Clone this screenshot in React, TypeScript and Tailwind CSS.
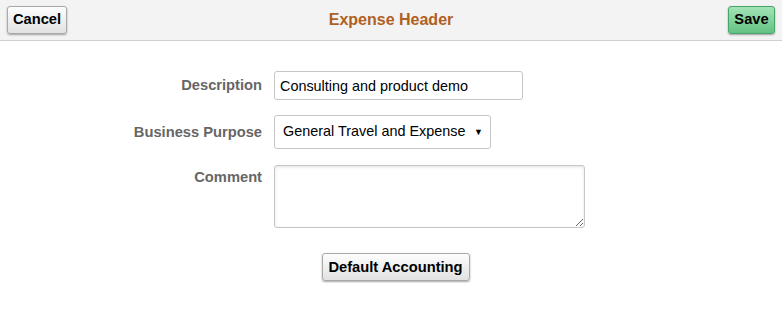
import { useState } from 'react';

const btnBase =
  'h-[28px] rounded-[3px] border px-[4px] text-[14.7px] font-bold text-black shadow-[0_1px_2px_rgba(0,0,0,0.35)]';

export default function App() {
  const [description, setDescription] = useState('Consulting and product demo');
  const [purpose, setPurpose] = useState('General Travel and Expense');
  const [comment, setComment] = useState('');

  return (
    <div className="h-[319px] w-[782px] bg-white font-['Liberation_Sans',Arial,sans-serif]">
      {/* Header bar */}
      <div className="flex h-[41px] items-center border-b border-[#d0d0d0] bg-[#f3f3f3] px-[7px] pb-[1px]">
        <div className="flex flex-1">
          <button
            className={`${btnBase} w-[60px] border-[#a9a9a9] bg-gradient-to-b from-[#fdfdfd] to-[#e2e2e2]`}
          >
            Cancel
          </button>
        </div>
        <h1 className="text-[16px] font-bold text-[#b0601f]">Expense Header</h1>
        <div className="flex flex-1 justify-end">
          <button
            className={`${btnBase} w-[47px] border-[#4aa46a] bg-gradient-to-b from-[#a3e3b7] to-[#62c283]`}
          >
            Save
          </button>
        </div>
      </div>

      {/* Form */}
      <div className="flex flex-col pt-[30px]">
        <div className="flex items-center gap-[12px]">
          <label className="w-[262px] text-right text-[14.7px] font-bold text-[#666]">Description</label>
          <input
            value={description}
            onChange={(e) => setDescription(e.target.value)}
            className="h-[29px] w-[249px] rounded-[3px] border border-[#c6c6c6] bg-white px-[5px] text-[14.4px] text-black outline-none"
          />
        </div>

        <div className="mt-[15px] flex items-center gap-[12px]">
          <label className="w-[262px] text-right text-[14.7px] font-bold text-[#666]">Business Purpose</label>
          <div className="relative">
            <select
              value={purpose}
              onChange={(e) => setPurpose(e.target.value)}
              className="h-[34px] w-[217px] appearance-none rounded-[3px] border border-[#c6c6c6] bg-white pl-[8px] pr-[20px] text-[14.4px] text-black outline-none"
            >
              <option>General Travel and Expense</option>
              <option>Customer Visit</option>
              <option>Training</option>
            </select>
            <span className="pointer-events-none absolute right-[8px] top-[11px] text-[9px] text-black">▼</span>
          </div>
        </div>

        <div className="mt-[16px] flex items-start gap-[12px]">
          <label className="w-[262px] pt-[1px] text-right text-[14.7px] font-bold text-[#666]">Comment</label>
          <textarea
            value={comment}
            onChange={(e) => setComment(e.target.value)}
            className="h-[63px] w-[311px] rounded-[3px] border border-[#c6c6c6] bg-white px-[5px] text-[14px] shadow-[inset_0_1px_3px_rgba(0,0,0,0.12)] outline-none"
          />
        </div>

        <div className="mt-[25px] flex justify-center pl-[9px]">
          <button
            className={`${btnBase} h-[28px] w-[148px] border-[#a9a9a9] bg-gradient-to-b from-[#fdfdfd] to-[#e2e2e2]`}
          >
            Default Accounting
          </button>
        </div>
      </div>
    </div>
  );
}
